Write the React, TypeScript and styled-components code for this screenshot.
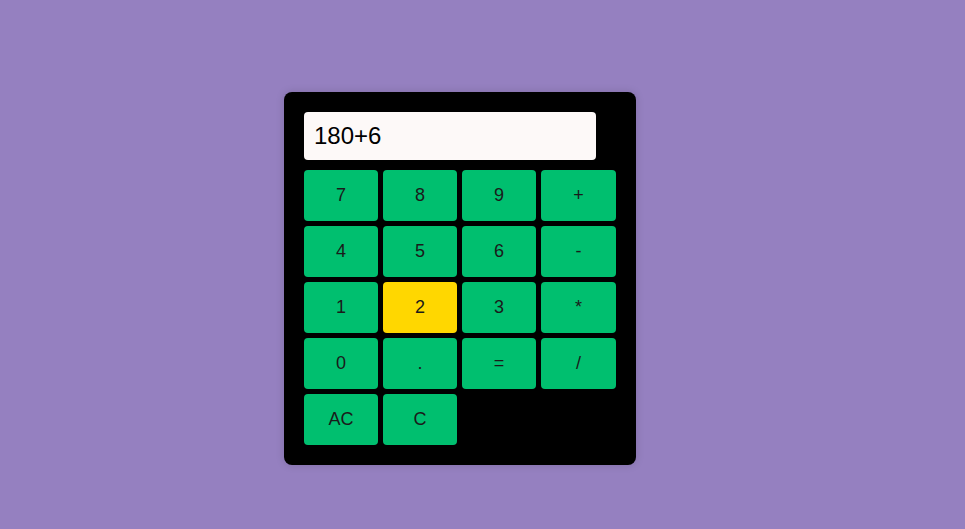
import React from "react";
import styled, { createGlobalStyle } from "styled-components";

const Global = createGlobalStyle`
  html, body { margin: 0; padding: 0; }
  body {
    background: #9580c0;
    font-family: "Liberation Sans", Arial, sans-serif;
    min-height: 100vh;
  }
`;

const Page = styled.div`
  padding: 92px 0 0 284px;
`;

const Calculator = styled.div`
  width: 352px;
  box-sizing: border-box;
  background: #000;
  border-radius: 8px;
  padding: 20px;
  box-shadow: 0 0 8px rgba(0, 0, 0, 0.15);
  display: flex;
  flex-direction: column;
  gap: 10px;
`;

const Display = styled.div`
  width: 292px;
  height: 48px;
  box-sizing: border-box;
  background: #fdf9f8;
  border-radius: 4px;
  padding: 0 10px;
  display: flex;
  align-items: center;
  font-size: 24px;
  color: #000;
`;

const Keys = styled.div`
  display: grid;
  grid-template-columns: 74px 74px 74px 75px;
  grid-auto-rows: 51px;
  gap: 5px;
`;

const Key = styled.button<{ $active?: boolean }>`
  border: none;
  border-radius: 4px;
  background: ${(p) => (p.$active ? "#ffd700" : "#00bf6f")};
  color: #1a1a1a;
  font-family: "Liberation Sans", Arial, sans-serif;
  font-size: 18px;
  padding: 0;
  cursor: pointer;
`;

const keys = ["7", "8", "9", "+", "4", "5", "6", "-", "1", "2", "3", "*", "0", ".", "=", "/", "AC", "C"];

export default function App() {
  return (
    <>
      <Global />
      <Page>
        <Calculator>
          <Display>180+6</Display>
          <Keys>
            {keys.map((k) => (
              <Key key={k} $active={k === "2"}>
                {k}
              </Key>
            ))}
          </Keys>
        </Calculator>
      </Page>
    </>
  );
}
